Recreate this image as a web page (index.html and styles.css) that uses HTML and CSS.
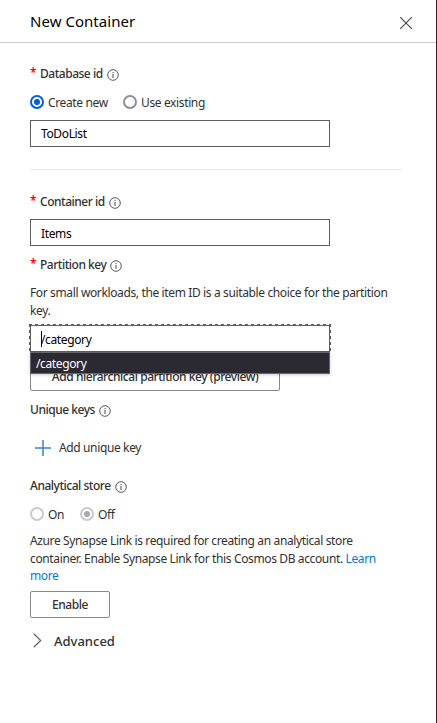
FILE: index.html
```html
<!DOCTYPE html>
<html lang="en">
<head>
<meta charset="utf-8">
<title>New Container</title>
<link rel="stylesheet" href="styles.css">
</head>
<body>
<svg class="defs" width="0" height="0" aria-hidden="true">
  <symbol id="info" viewBox="0 0 12 12"><circle cx="6" cy="6" r="5.3" fill="none" stroke="currentColor" stroke-width=".9"/><path d="M6 5v4M6 3v1.1" stroke="currentColor"/></symbol>
</svg>
<main class="panel">
  <header class="header">
    <h1 class="title">New Container</h1>
    <svg class="close" viewBox="0 0 12 12"><path d="M0 0 12 12M12 0 0 12" stroke="currentColor" stroke-width="1.1"/></svg>
  </header>
  <form class="form">
    <div class="label database"><span class="star">*</span><span>Database id</span><svg class="info"><use href="#info"/></svg></div>
    <div class="radios">
      <span class="radio checked"></span><span class="choice create">Create new</span>
      <span class="radio"></span><span class="choice">Use existing</span>
    </div>
    <div class="input"><span>ToDoList</span></div>
    <hr class="divider">
    <div class="label"><span class="star">*</span><span>Container id</span><svg class="info"><use href="#info"/></svg></div>
    <div class="input items"><span>Items</span></div>
    <div class="label partition"><span class="star">*</span><span>Partition key</span><svg class="info"><use href="#info"/></svg></div>
    <p class="text hint">For small workloads, the item ID is a suitable choice for the partition<br>key.</p>
    <div class="combo">
      <div class="input focused"><span class="caret"></span><span>/category</span></div>
      <div class="menu">/category</div>
    </div>
    <div class="button hierarchical">Add hierarchical partition key (preview)</div>
    <div class="label unique"><span>Unique keys</span><svg class="info"><use href="#info"/></svg></div>
    <div class="add"><svg class="plus" viewBox="0 0 16 16"><path d="M0 8H16M8 0V16" stroke="currentColor" stroke-width="1.5"/></svg><span>Add unique key</span></div>
    <div class="label"><span>Analytical store</span><svg class="info"><use href="#info"/></svg></div>
    <div class="radios store">
      <span class="radio disabled"></span><span class="choice on">On</span>
      <span class="radio disabled checked"></span><span class="choice">Off</span>
    </div>
    <p class="text synapse">Azure Synapse Link is required for creating an analytical store<br>container. Enable Synapse Link for this Cosmos DB account. <a class="link">Learn</a><br><a class="link">more</a></p>
    <div class="button enable">Enable</div>
    <div class="advanced"><svg class="chevron" viewBox="0 0 9 15"><path d="M.7.7 7.7 7.5.7 14.3" fill="none" stroke="currentColor" stroke-width="1.2"/></svg><span>Advanced</span></div>
  </form>
</main>
</body>
</html>
```

FILE: styles.css
```css
* { box-sizing: border-box; }
body { margin: 0; background: #fff; color: #323130; font: 12px/18px "Noto Sans", "Open Sans", sans-serif; letter-spacing: -.37px; }
.defs { position: absolute; }
.panel { height: 723px; border-right: 1px solid #24232a; overflow: hidden; }
.header { height: 43px; border-bottom: 1px solid #c8c8c8; display: flex; align-items: center; justify-content: space-between; padding: 0 24px 0 30px; }
.title { margin: 0; font-size: 15px; font-weight: 400; color: #000; line-height: 20px; letter-spacing: .04px; }
.close { width: 12px; height: 12px; color: #484644; margin-top: 4px; }
.form { padding: 22px 30px 0; white-space: nowrap; }
.label { display: flex; align-items: center; height: 18px; font-weight: 500; letter-spacing: -.48px; }
.star { color: #f00; width: 10px; font-size: 12px; font-weight: 600; margin-top: -2px; }
.info { width: 12px; height: 12px; margin-left: 4px; margin-top: 1px; color: #484644; }
.radios { display: flex; align-items: center; height: 18px; margin-top: 10px; }
.radio { width: 14px; height: 14px; border: 2px solid #8f8f9d; border-radius: 50%; flex: none; }
.radio.checked { border-color: #0060df; background: radial-gradient(circle, #0060df 2.7px, #fff 3.4px); }
.radio.disabled { border-color: #c9c9d0; }
.radio.disabled.checked { border-color: #c9c9d0; background: radial-gradient(circle, #aaaab3 2.7px, #fff 3.4px); }
.choice { margin-left: 4px; padding-top: 2px; }
.create { width: 75px; }
.on { width: 32px; }
.input { width: 300px; height: 27px; border: 1px solid #605e5c; padding: 1px 10px 0; display: flex; align-items: center; color: #000; background: #fff; margin-top: 9px; }
.divider { width: 372px; height: 1px; border: 0; background: #e8e8e8; margin: 22px 0 23px; }
.items { margin-top: 8px; padding-top: 2px; }
.partition { margin-top: 10px; }
.text { margin: 0; line-height: 17.5px; }
.hint { margin-top: 10px; }
.combo { position: relative; margin-top: 6px; }
.combo::before {
  content: ""; position: absolute; left: -1px; top: -1px; width: 302px; height: 29px;
  background:
    repeating-linear-gradient(90deg, #605e5c 0 3px, #fff 3px 6px) 0 0 / 100% 1px no-repeat,
    repeating-linear-gradient(#605e5c 0 3px, #fff 3px 6px) 0 0 / 1px 100% no-repeat,
    repeating-linear-gradient(#605e5c 0 3px, #fff 3px 6px) 100% 0 / 1px 100% no-repeat;
}
.focused { position: relative; margin: 0; padding-top: 3px; }
.caret { width: 1px; height: 16px; background: #000; margin: -2px -1px 0 0; }
.menu { position: absolute; left: 0; top: 27px; width: 300px; height: 22px; padding: 1px 5px 0; line-height: 20px; color: #fff; background: #2b2a33; border: 1px solid #67666c; box-shadow: 0 1px 3px #0003; }
.button { height: 27px; border: 1px solid #8a8886; border-radius: 2px; display: flex; align-items: center; justify-content: center; font-weight: 500; letter-spacing: -.44px; padding-top: 2px; }
.hierarchical { width: 250px; margin-top: 12px; padding: 0 0 1px; }
.unique { margin-top: 10px; }
.add { display: flex; align-items: center; height: 18px; margin: 20px 0 20px 5px; }
.plus { width: 16px; height: 16px; color: #3b83ca; margin-right: 8px; }
.synapse { margin-top: 9px; }
.link { color: #0078d4; }
.enable { width: 80px; margin-top: 6px; }
.advanced { display: flex; align-items: center; height: 20px; margin: 13px 0 0 3px; font-size: 13px; font-weight: 500; letter-spacing: 0; }
.chevron { width: 9px; height: 15px; color: #605e5c; margin-right: 12px; }
```
